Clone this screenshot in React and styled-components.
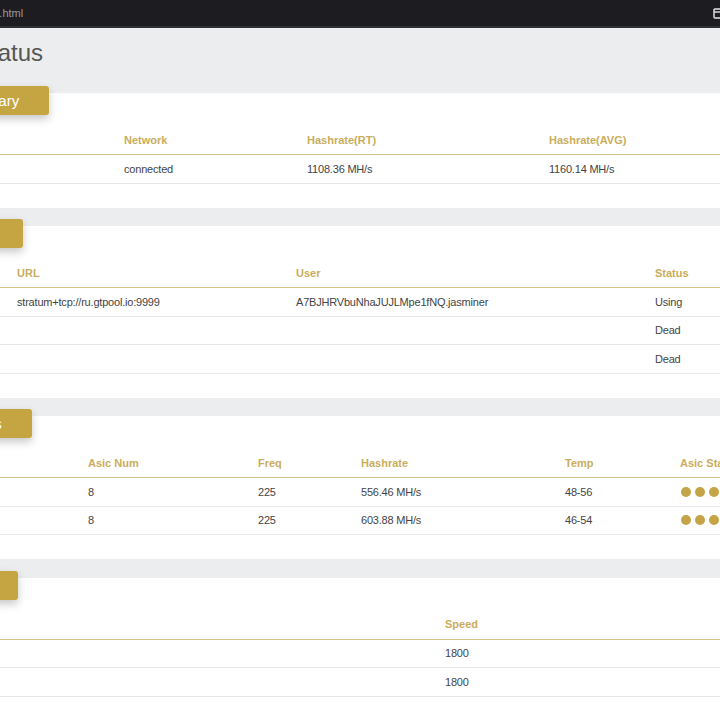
import React from 'react'
import styled, { createGlobalStyle } from 'styled-components'

const GlobalStyle = createGlobalStyle`
  html, body {
    margin: 0;
    padding: 0;
    background: #ecedee;
    overflow: hidden;
  }
  body {
    font-family: "Liberation Sans", Arial, sans-serif;
  }
`

//css section
const TopBar = styled.div`
  height: 26px;
  background: #1c1c21;
  border-bottom: 2px solid #2f2f34;
  display: flex;
  align-items: center;
  justify-content: space-between;
  overflow: hidden;
  color: #9a9a9a;
  font-size: 11px;

  .path {
    margin-left: -30px;
    white-space: nowrap;
  }
  svg {
    margin-right: -7px;
    flex-shrink: 0;
  }
`

const Page = styled.div`
  width: 940px;
  margin-left: -100px;
`

const Title = styled.h1`
  margin: 10px 0 25px 75px;
  font-size: 24px;
  line-height: 30px;
  font-weight: 400;
  color: #555;
`

const Card = styled.section`
  background: #fff;
  margin: 0 0 18.5px 10px;
  padding: 0 15px 24px;
`

const Badge = styled.div`
  display: inline-block;
  margin-top: -7px;
  height: 29px;
  line-height: 29px;
  padding: 0 30px;
  background: #c5a542;
  color: #fff;
  font-size: 15px;
  border-radius: 3px;
  box-shadow: 0 4px 9px rgba(0, 0, 0, 0.22);
  vertical-align: top;
`

const Table = styled.div`
  margin-top: 10px;
`

const Row = styled.div`
  display: grid;
  grid-template-columns: ${(p) => p.$cols};
  align-items: center;
  height: ${(p) => (p.$head ? '29px' : '27.5px')};
  border-bottom: 1px solid ${(p) => (p.$head ? '#d6c387' : '#e6e6e6')};
  font-size: 11px;
  font-weight: ${(p) => (p.$head ? 700 : 400)};
  letter-spacing: ${(p) => (p.$head ? '0' : '-0.2px')};
  color: ${(p) => (p.$head ? '#c9ad5c' : '#444444')};
  white-space: nowrap;
`

const Dots = styled.div`
  display: flex;
  gap: 4px;
  padding-left: 1px;
`

const Dot = styled.span`
  width: 10px;
  height: 10px;
  border-radius: 50%;
  background: #c3a446;
  flex-shrink: 0;
`

const sections = [
  {
    title: 'Summary',
    cols: '199px 183px 242px 1fr',
    head: ['Elapsed', 'Network', 'Hashrate(RT)', 'Hashrate(AVG)'],
    rows: [['0d 4h 21m', 'connected', '1108.36 MH/s', '1160.14 MH/s']],
  },
  {
    title: 'Pools',
    cols: '92px 279px 359px 1fr',
    head: ['Pool', 'URL', 'User', 'Status'],
    rows: [
      ['1', 'stratum+tcp://ru.gtpool.io:9999', 'A7BJHRVbuNhaJUJLMpe1fNQ.jasminer', 'Using'],
      ['2', '', '', 'Dead'],
      ['3', '', '', 'Dead'],
    ],
  },
  {
    title: 'Chains',
    cols: '163px 170px 103px 204px 115px 1fr',
    head: ['Chain', 'Asic Num', 'Freq', 'Hashrate', 'Temp', 'Asic Status'],
    rows: [
      ['1', '8', '225', '556.46 MH/s', '48-56', 'dots'],
      ['2', '8', '225', '603.88 MH/s', '46-54', 'dots'],
    ],
  },
  {
    title: 'Fans',
    cols: '520px 1fr',
    head: ['Fan', 'Speed'],
    rows: [
      ['1', '1800'],
      ['2', '1800'],
    ],
  },
]

const Cell = ({ value }) => {
  if (value === 'dots') {
    return (
      <Dots>
        {Array.from({ length: 8 }).map((_, i) => (
          <Dot key={i} />
        ))}
      </Dots>
    )
  }
  return <div>{value}</div>
}

const App = () => {
  return (
    <>
      <GlobalStyle />
      <TopBar>
        <span className="path">status.html</span>
        <svg width="14" height="12" viewBox="0 0 14 12" fill="none" stroke="#e8e8e8" strokeWidth="1.4">
          <rect x="1" y="2" width="11" height="9" rx="1" />
          <path d="M1 5h11" />
        </svg>
      </TopBar>
      <Page>
        <Title>Status</Title>
        {sections.map((s) => (
          <Card key={s.title}>
            <Badge>{s.title}</Badge>
            <Table>
              <Row $head $cols={s.cols}>
                {s.head.map((h) => (
                  <div key={h}>{h}</div>
                ))}
              </Row>
              {s.rows.map((r, i) => (
                <Row key={i} $cols={s.cols}>
                  {r.map((v, j) => (
                    <Cell key={j} value={v} />
                  ))}
                </Row>
              ))}
            </Table>
          </Card>
        ))}
      </Page>
    </>
  )
}

export default App
